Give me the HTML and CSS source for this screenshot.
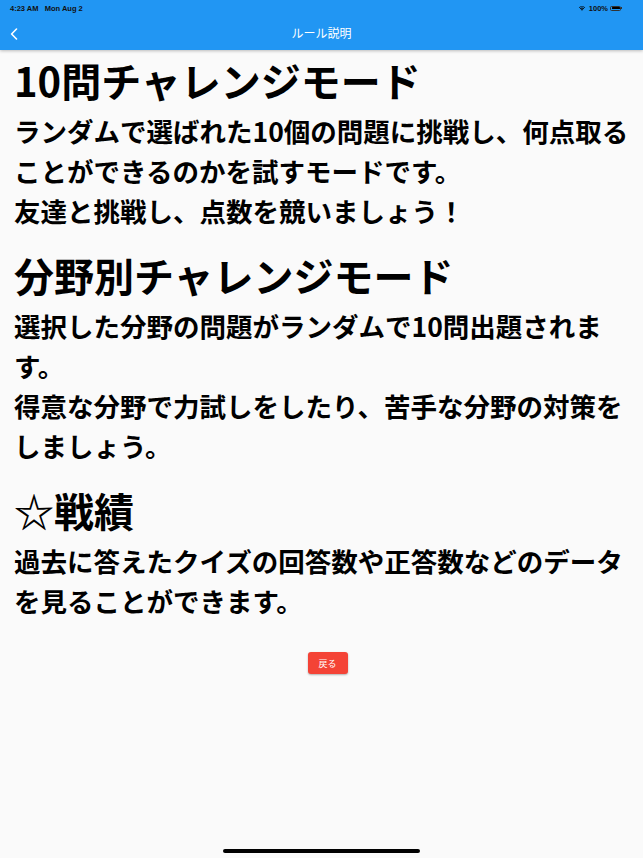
FILE: index.html
```html
<!DOCTYPE html>
<html lang="ja">
<head>
<meta charset="utf-8">
<title>ルール説明</title>
<link rel="stylesheet" href="styles.css">
</head>
<body>
<div class="screen">
  <header class="appbar">
    <div class="statusbar">
      <span class="status-left">4:23 AM&nbsp;&nbsp;&nbsp;Mon Aug 2</span>
      <span class="status-right">
        <svg class="wifi" viewBox="0 0 12 9" width="8" height="6"><path d="M6 8.6 L4.4 6.9 A2.3 2.3 0 0 1 7.6 6.9 Z M2.9 5.4 A4.4 4.4 0 0 1 9.1 5.4 L8.3 6.2 A3.3 3.3 0 0 0 3.7 6.2 Z M1.3 3.8 A6.6 6.6 0 0 1 10.7 3.8 L9.9 4.6 A5.5 5.5 0 0 0 2.1 4.6 Z" fill="#000"/></svg>
        <span class="pct">100%</span>
        <span class="battery"><span class="battery-fill"></span></span><span class="battery-tip"></span>
      </span>
    </div>
    <div class="toolbar">
      <svg class="back" viewBox="0 0 8 12" width="8" height="12"><path d="M6.5 1 L1.6 6 L6.5 11" fill="none" stroke="#fff" stroke-width="1.6" stroke-linecap="round" stroke-linejoin="round"/></svg>
      <h1 class="title">ルール説明</h1>
    </div>
  </header>

  <main class="content">
    <section class="section">
      <h2 class="heading">10問チャレンジモード</h2>
      <p class="body">ランダムで選ばれた10個の問題に挑戦し、何点取ることができるのかを試すモードです。<br>友達と挑戦し、点数を競いましょう！</p>
    </section>
    <section class="section">
      <h2 class="heading">分野別チャレンジモード</h2>
      <p class="body">選択した分野の問題がランダムで10問出題されます。<br>得意な分野で力試しをしたり、苦手な分野の対策をしましょう。</p>
    </section>
    <section class="section">
      <h2 class="heading">☆戦績</h2>
      <p class="body">過去に答えたクイズの回答数や正答数などのデータを見ることができます。</p>
    </section>
    <div class="actions">
      <button class="back-btn">戻る</button>
    </div>
  </main>

  <div class="home-indicator"></div>
</div>
</body>
</html>
```

FILE: styles.css
```css
html, body {
  margin: 0;
  padding: 0;
}
body {
  background: #fafafa;
  font-family: "Noto Sans CJK JP", "Noto Sans", sans-serif;
  color: #000;
}
.screen {
  position: relative;
  width: 643px;
  height: 858px;
  overflow: hidden;
  background: #fafafa;
}
.appbar {
  background: #2196f3;
  height: 50px;
  box-shadow: 0 1px 3px rgba(0, 0, 0, 0.25);
  position: relative;
  z-index: 1;
}
.statusbar {
  height: 16px;
  display: flex;
  align-items: center;
  justify-content: space-between;
  padding: 0 21px 0 10px;
  font-family: "Liberation Sans", Arial, sans-serif;
  font-size: 7.5px;
  font-weight: 700;
  color: #111;
}
.status-right {
  display: flex;
  align-items: center;
  gap: 2px;
}
.wifi {
  display: block;
  margin-right: 1px;
}
.pct {
  font-weight: 600;
}
.battery {
  width: 11px;
  height: 5px;
  border: 1px solid #333;
  border-radius: 1.5px;
  box-sizing: border-box;
  padding: 0.5px;
  display: flex;
}
.battery-fill {
  flex: 1;
  background: #000;
  border-radius: 0.5px;
}
.battery-tip {
  width: 1px;
  height: 2px;
  background: #333;
  margin-left: -2px;
}
.toolbar {
  height: 34px;
  display: flex;
  align-items: center;
  justify-content: center;
  position: relative;
}
.back {
  position: absolute;
  left: 10px;
  top: 12px;
}
.title {
  margin: 0;
  font-size: 12px;
  font-weight: 400;
  color: #fff;
  line-height: 1;
}
.content {
  padding: 5px 2px 0 14px;
}
.section {
  margin-bottom: 19px;
}
.section:last-of-type {
  margin-bottom: 0;
}
.heading {
  margin: 0;
  font-size: 40px;
  font-weight: 700;
  line-height: 50px;
  padding-bottom: 6px;
}
.body {
  margin: 0;
  font-size: 26.5px;
  font-weight: 700;
  line-height: 40px;
  line-break: strict;
}
.actions {
  display: flex;
  justify-content: center;
  padding-top: 31px;
}
.back-btn {
  width: 40px;
  height: 22px;
  border: none;
  border-radius: 3px;
  background: #f44336;
  color: #fff;
  font-family: "Noto Sans CJK JP", sans-serif;
  font-size: 9px;
  padding: 0;
  box-shadow: 0 1px 2px rgba(0, 0, 0, 0.3);
}
.home-indicator {
  position: absolute;
  left: 223px;
  top: 849px;
  width: 197px;
  height: 4px;
  border-radius: 2px;
  background: #000;
}
```
